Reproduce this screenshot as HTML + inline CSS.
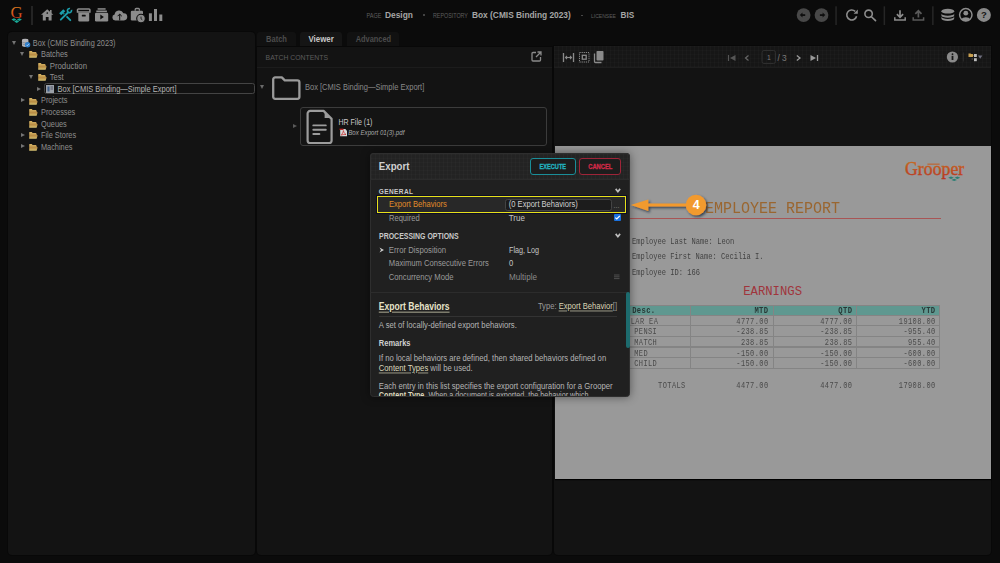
<!DOCTYPE html>
<html><head><meta charset="utf-8">
<style>
*{box-sizing:border-box;margin:0;padding:0}
html,body{width:1000px;height:563px;overflow:hidden;background:#0b0b0b;font-family:"Liberation Sans",sans-serif;color:#8c8c8c}
.a{position:absolute;white-space:nowrap;line-height:0}
.b{position:absolute}
.tri{position:absolute;width:0;height:0;border-left:2.5px solid transparent;border-right:2.5px solid transparent;border-top:4px solid #777}
.trr{position:absolute;width:0;height:0;border-top:2.5px solid transparent;border-bottom:2.5px solid transparent;border-left:4px solid #777}
.fold{position:absolute;width:9px;height:7px;background:#c9a85a;border-radius:1px}
.fold:before{content:"";position:absolute;left:0;top:-1.5px;width:4px;height:2px;background:#c9a85a;border-radius:1px 1px 0 0}
.grid{background-image:linear-gradient(rgba(255,255,255,.012) 1px,transparent 1px),linear-gradient(90deg,rgba(255,255,255,.016) 1px,transparent 1px);background-size:4px 4px}
.grid2{background-image:linear-gradient(rgba(255,255,255,.012) 1px,transparent 1px),linear-gradient(90deg,rgba(255,255,255,.02) 1px,transparent 1px);background-size:4px 4px}
svg{position:absolute;overflow:visible}
</style></head><body>
<svg style="left:0;top:0" width="30" height="30" viewBox="0 0 30 30">
 <defs><linearGradient id="gg" x1="0" y1="0" x2="0" y2="1"><stop offset="0" stop-color="#e2901e"/><stop offset="1" stop-color="#cc2a1e"/></linearGradient></defs>
 <text x="16.5" y="17.8" text-anchor="middle" font-family="Liberation Serif" font-size="16.8" fill="url(#gg)">G</text>
 <path d="M11.4 19.6 l2.5 -1.4 l2.5 1.4 l-2.5 1.4z M16.9 19.6 l2.5 -1.4 l2.5 1.4 l-2.5 1.4z M14.2 21.5 l2.5 -1.4 l2.5 1.4 l-2.5 1.4z" fill="#18a896"/>
</svg>
<div class="b" style="left:31px;top:5.8px;width:1.8px;height:19.2px;background:#242424"></div>
<svg style="left:0;top:0" width="200" height="30" viewBox="0 0 200 30">
 <path d="M47.2 9.2 L53.4 14.8 L51.6 14.8 L51.6 20.4 L48.6 20.4 L48.6 17 L45.8 17 L45.8 20.4 L42.8 20.4 L42.8 14.8 L41 14.8z" fill="#8c8c8c"/>
 <rect x="50" y="10" width="1.6" height="3" fill="#8c8c8c"/>
 <circle cx="47.3" cy="13" r="0.85" fill="#0c0c0c"/>
 <g fill="#1b9caa">
  <path d="M59.2 13.2 L63.3 9.2 L65.3 11.2 L61.2 15.2z"/>
 </g>
 <path d="M64 13.9 L70.3 20.2" stroke="#1b9caa" stroke-width="1.9" stroke-linecap="round"/>
 <path d="M60.8 19.7 L68 12.5" stroke="#0c0c0c" stroke-width="3.4" stroke-linecap="round"/>
 <path d="M60.8 19.7 L68 12.5" stroke="#1b9caa" stroke-width="1.9" stroke-linecap="round"/>
 <path d="M71.4 9.9 A2.05 2.05 0 1 1 70 8.6" stroke="#1b9caa" stroke-width="1.7" fill="none"/>
 <path d="M78.4 9 H89 a0.9 0.9 0 0 1 0.9 0.9 V12 H77.5 V9.9 a0.9 0.9 0 0 1 0.9 -0.9z" fill="none" stroke="#8c8c8c" stroke-width="1.5"/>
 <path d="M78.3 12.8 H89.2 V20.2 a1.2 1.2 0 0 1 -1.2 1.2 H79.5 a1.2 1.2 0 0 1 -1.2 -1.2z" fill="#8c8c8c"/>
 <rect x="81.8" y="14.8" width="3.9" height="1.6" rx="0.5" fill="#0c0c0c"/>
 <rect x="97.6" y="8.2" width="8" height="1.5" fill="#8c8c8c"/>
 <rect x="96.3" y="10.5" width="10.6" height="1.6" fill="#8c8c8c"/>
 <rect x="95" y="12.8" width="13.2" height="8.7" rx="1.2" fill="#8c8c8c"/>
 <path d="M100.3 14.6 L103.9 17.1 L100.3 19.6z" fill="#0c0c0c"/>
 <path d="M115.2 20.4 a3 3 0 0 1 -0.6 -5.9 a4.6 4.6 0 0 1 8.8 -1.3 a3.6 3.6 0 0 1 0.5 7.2z" fill="#8c8c8c"/>
 <path d="M119.7 20.4 V14.2 M117.6 16.2 L119.7 14.1 L121.8 16.2" stroke="#0c0c0c" stroke-width="1" fill="none"/>
 <path d="M135.2 10.8 V9.5 a1 1 0 0 1 1 -1 h2.2 a1 1 0 0 1 1 1 V10.8" fill="none" stroke="#8c8c8c" stroke-width="1.3"/>
 <rect x="130.8" y="10.8" width="12.2" height="9.6" rx="1.2" fill="#8c8c8c"/>
 <circle cx="141" cy="18.6" r="4.3" fill="#8c8c8c" stroke="#0c0c0c" stroke-width="1.1"/>
 <path d="M141 16.6 V18.8 L142.3 19.8" stroke="#0c0c0c" stroke-width="0.8" fill="none"/>
 <rect x="148.9" y="13.3" width="3" height="7.7" fill="#8c8c8c"/>
 <rect x="154" y="9" width="3" height="12" fill="#8c8c8c"/>
 <rect x="159.3" y="14.5" width="3" height="6.5" fill="#8c8c8c"/>
</svg>
<div class="a" style="left:366.50px;top:15.33px;font-size:5.55px;font-weight:400;font-style:normal;color:#5e5e5e;font-family:&quot;Liberation Sans&quot;,sans-serif;transform:translateY(0.73px) scaleY(1.17);transform-origin:0 0;">PAGE</div>
<div class="a" style="left:385.00px;top:14.25px;font-size:8.40px;font-weight:700;font-style:normal;color:#a5a5a5;font-family:&quot;Liberation Sans&quot;,sans-serif;transform:translateY(0.90px) scaleY(1.17);transform-origin:0 0;">Design</div>
<div class="b" style="left:423.3px;top:14.3px;width:1.6px;height:1.6px;border-radius:50%;background:#505050"></div>
<div class="a" style="left:433.00px;top:15.34px;font-size:5.37px;font-weight:400;font-style:normal;color:#5e5e5e;font-family:&quot;Liberation Sans&quot;,sans-serif;transform:translateY(0.72px) scaleY(1.17);transform-origin:0 0;">REPOSITORY</div>
<div class="a" style="left:472.00px;top:14.25px;font-size:8.36px;font-weight:700;font-style:normal;color:#a5a5a5;font-family:&quot;Liberation Sans&quot;,sans-serif;transform:translateY(0.90px) scaleY(1.17);transform-origin:0 0;">Box (CMIS Binding 2023)</div>
<div class="b" style="left:581px;top:14.5px;width:1.6px;height:1.6px;border-radius:50%;background:#505050"></div>
<div class="a" style="left:591.00px;top:15.35px;font-size:5.05px;font-weight:400;font-style:normal;color:#5e5e5e;font-family:&quot;Liberation Sans&quot;,sans-serif;transform:translateY(0.70px) scaleY(1.17);transform-origin:0 0;">LICENSEE</div>
<div class="a" style="left:620.50px;top:14.85px;font-size:8.20px;font-weight:700;font-style:normal;color:#a5a5a5;font-family:&quot;Liberation Sans&quot;,sans-serif;transform:translateY(0.89px) scaleY(1.17);transform-origin:0 0;">BIS</div>
<svg style="left:0;top:0" width="1000" height="30" viewBox="0 0 1000 30">
 <circle cx="803.6" cy="15.1" r="6.9" fill="#484848"/>
 <path d="M802.5 12.6 L799.8 15.1 L802.5 17.6z" fill="#0e0e0e"/><rect x="802" y="14.2" width="3.2" height="1.8" fill="#0e0e0e"/>
 <circle cx="821.5" cy="15.1" r="6.9" fill="#484848"/>
 <path d="M822.6 12.6 L825.3 15.1 L822.6 17.6z" fill="#0e0e0e"/><rect x="819.9" y="14.2" width="3.2" height="1.8" fill="#0e0e0e"/>
 <rect x="835.3" y="6.3" width="1.5" height="18.7" fill="#262626"/>
 <path d="M856.6 16.2 A5 5 0 1 1 855.2 11.3" stroke="#8c8c8c" stroke-width="1.6" fill="none"/>
 <path d="M857.8 9.6 L857.8 13.8 L853.6 13.8z" fill="#8c8c8c"/>
 <circle cx="868.6" cy="13.8" r="3.7" stroke="#8c8c8c" stroke-width="1.6" fill="none"/>
 <path d="M871.2 16.5 L875.5 20.6" stroke="#8c8c8c" stroke-width="1.7" stroke-linecap="round"/>
 <rect x="883.6" y="6.3" width="1.5" height="18.7" fill="#262626"/>
 <path d="M900 10.3 V17 M896.9 14.2 L900 17.3 L903.1 14.2" stroke="#8c8c8c" stroke-width="1.7" fill="none"/>
 <path d="M894.8 17.3 V20 H905.2 V17.3" stroke="#8c8c8c" stroke-width="1.5" fill="none"/>
 <path d="M918.4 17.5 V10.8 M915.3 13.9 L918.4 10.8 L921.5 13.9" stroke="#5a5a5a" stroke-width="1.7" fill="none"/>
 <path d="M913.2 17.3 V20 H923.6 V17.3" stroke="#5a5a5a" stroke-width="1.5" fill="none"/>
 <rect x="932.1" y="6.3" width="1.5" height="18.7" fill="#262626"/>
 <ellipse cx="947.8" cy="11.2" rx="6.4" ry="2.4" fill="#8c8c8c"/>
 <path d="M941.4 13.4 a6.4 2.4 0 0 0 12.8 0 v2 a6.4 2.4 0 0 1 -12.8 0z" fill="#8c8c8c"/>
 <path d="M941.4 16.6 a6.4 2.4 0 0 0 12.8 0 v2 a6.4 2.4 0 0 1 -12.8 0z" fill="#8c8c8c"/>
 <circle cx="965.8" cy="14.8" r="6.2" stroke="#8c8c8c" stroke-width="1.5" fill="none"/>
 <circle cx="965.8" cy="13.2" r="2.4" fill="#8c8c8c"/>
 <path d="M961.2 19.3 a5 3.2 0 0 1 9.2 0 a6.2 6.2 0 0 1 -9.2 0z" fill="#8c8c8c"/>
 <circle cx="983.9" cy="14.9" r="7" fill="#8a8a8a"/>
 <text x="983.9" y="18.3" text-anchor="middle" font-family="Liberation Sans" font-weight="700" font-size="9.5" fill="#161616">?</text>
</svg>
<div class="b" style="left:8px;top:32px;width:246.5px;height:522.5px;border-radius:4px;background:#131313;box-shadow:0 0 0 1px #080808"></div>
<div class="b" style="left:11.8px;top:40.8px;width:0;height:0;border-left:2.4px solid transparent;border-right:2.4px solid transparent;border-top:4px solid #747474"></div>
<svg style="left:20.5px;top:38.3px" width="10" height="10" viewBox="0 0 10 10"><path d="M1 2 a3.2 1.3 0 0 1 6.4 0 V7.6 a3.2 1.3 0 0 1 -6.4 0z" fill="#b4b4b8"/><path d="M1 3.6 a3.2 1.3 0 0 0 6.4 0 M1 5.4 a3.2 1.3 0 0 0 6.4 0" stroke="#6a6a70" stroke-width="0.5" fill="none"/><circle cx="6.6" cy="6.8" r="2.7" fill="#2f7ec8"/><path d="M5.3 6.8 L6.3 7.8 L8 5.8" stroke="#cfe4ff" stroke-width="0.7" fill="none"/></svg>
<div class="a" style="left:32.80px;top:42.58px;font-size:7.33px;font-weight:400;font-style:normal;color:#8f8f8f;font-family:&quot;Liberation Sans&quot;,sans-serif;transform:translateY(0.84px) scaleY(1.17);transform-origin:0 0;">Box (CMIS Binding 2023)</div>
<div class="b" style="left:20px;top:52.36px;width:0;height:0;border-left:2.4px solid transparent;border-right:2.4px solid transparent;border-top:4px solid #747474"></div><svg style="left:29px;top:51.36px" width="10" height="8" viewBox="0 0 10 8"><defs><linearGradient id="fg" x1="0" y1="0" x2="0" y2="1"><stop offset="0" stop-color="#d8b868"/><stop offset=".55" stop-color="#b88c44"/><stop offset="1" stop-color="#d4c070"/></linearGradient></defs><path d="M0.2 0.6 Q0.2 0.1 0.7 0.1 H2.8 L3.6 0.9 H7.3 V2 L8.6 3.6 L7.6 6.7 H0.2z" fill="url(#fg)"/></svg>
<div class="a" style="left:41.00px;top:54.14px;font-size:7.42px;font-weight:400;font-style:normal;color:#8f8f8f;font-family:&quot;Liberation Sans&quot;,sans-serif;transform:translateY(0.85px) scaleY(1.17);transform-origin:0 0;">Batches</div>
<svg style="left:37.5px;top:62.92px" width="10" height="8" viewBox="0 0 10 8"><defs><linearGradient id="fg" x1="0" y1="0" x2="0" y2="1"><stop offset="0" stop-color="#d8b868"/><stop offset=".55" stop-color="#b88c44"/><stop offset="1" stop-color="#d4c070"/></linearGradient></defs><path d="M0.2 0.6 Q0.2 0.1 0.7 0.1 H2.8 L3.6 0.9 H7.3 V2 L8.6 3.6 L7.6 6.7 H0.2z" fill="url(#fg)"/></svg>
<div class="a" style="left:49.70px;top:65.69px;font-size:7.82px;font-weight:400;font-style:normal;color:#8f8f8f;font-family:&quot;Liberation Sans&quot;,sans-serif;transform:translateY(0.87px) scaleY(1.17);transform-origin:0 0;">Production</div>
<div class="b" style="left:28.5px;top:75.47999999999999px;width:0;height:0;border-left:2.4px solid transparent;border-right:2.4px solid transparent;border-top:4px solid #747474"></div><svg style="left:37.5px;top:74.47999999999999px" width="10" height="8" viewBox="0 0 10 8"><defs><linearGradient id="fg" x1="0" y1="0" x2="0" y2="1"><stop offset="0" stop-color="#d8b868"/><stop offset=".55" stop-color="#b88c44"/><stop offset="1" stop-color="#d4c070"/></linearGradient></defs><path d="M0.2 0.6 Q0.2 0.1 0.7 0.1 H2.8 L3.6 0.9 H7.3 V2 L8.6 3.6 L7.6 6.7 H0.2z" fill="url(#fg)"/></svg>
<div class="a" style="left:49.70px;top:77.25px;font-size:7.58px;font-weight:400;font-style:normal;color:#8f8f8f;font-family:&quot;Liberation Sans&quot;,sans-serif;transform:translateY(0.85px) scaleY(1.17);transform-origin:0 0;">Test</div>
<div class="b" style="left:37px;top:86.63999999999999px;width:0;height:0;border-top:2.4px solid transparent;border-bottom:2.4px solid transparent;border-left:4px solid #747474"></div>
<div class="b" style="left:43.5px;top:83.13999999999999px;width:211px;height:11.2px;border:1px solid #444;border-radius:2.5px;background:#121212"></div>
<svg style="left:46px;top:85.03999999999999px" width="9" height="8" viewBox="0 0 9 8"><rect x="0" y="0" width="8" height="8" fill="#9aa0a8"/><rect x="1.5" y="1.5" width="2" height="5" fill="#3f5f8a"/><rect x="4.5" y="1.5" width="2.5" height="1" fill="#556"/><rect x="4.5" y="3.5" width="2.5" height="1" fill="#556"/></svg>
<div class="a" style="left:57.50px;top:88.82px;font-size:7.49px;font-weight:400;font-style:normal;color:#b5b5b5;font-family:&quot;Liberation Sans&quot;,sans-serif;transform:translateY(0.85px) scaleY(1.17);transform-origin:0 0;">Box [CMIS Binding—Simple Export]</div>
<div class="b" style="left:20.5px;top:98.19999999999999px;width:0;height:0;border-top:2.4px solid transparent;border-bottom:2.4px solid transparent;border-left:4px solid #747474"></div>
<svg style="left:29px;top:97.6px" width="10" height="8" viewBox="0 0 10 8"><defs><linearGradient id="fg" x1="0" y1="0" x2="0" y2="1"><stop offset="0" stop-color="#d8b868"/><stop offset=".55" stop-color="#b88c44"/><stop offset="1" stop-color="#d4c070"/></linearGradient></defs><path d="M0.2 0.6 Q0.2 0.1 0.7 0.1 H2.8 L3.6 0.9 H7.3 V2 L8.6 3.6 L7.6 6.7 H0.2z" fill="url(#fg)"/></svg>
<div class="a" style="left:41.00px;top:100.38px;font-size:7.35px;font-weight:400;font-style:normal;color:#8f8f8f;font-family:&quot;Liberation Sans&quot;,sans-serif;transform:translateY(0.84px) scaleY(1.17);transform-origin:0 0;">Projects</div>
<svg style="left:29px;top:109.16px" width="10" height="8" viewBox="0 0 10 8"><defs><linearGradient id="fg" x1="0" y1="0" x2="0" y2="1"><stop offset="0" stop-color="#d8b868"/><stop offset=".55" stop-color="#b88c44"/><stop offset="1" stop-color="#d4c070"/></linearGradient></defs><path d="M0.2 0.6 Q0.2 0.1 0.7 0.1 H2.8 L3.6 0.9 H7.3 V2 L8.6 3.6 L7.6 6.7 H0.2z" fill="url(#fg)"/></svg>
<div class="a" style="left:41.00px;top:111.94px;font-size:7.35px;font-weight:400;font-style:normal;color:#8f8f8f;font-family:&quot;Liberation Sans&quot;,sans-serif;transform:translateY(0.84px) scaleY(1.17);transform-origin:0 0;">Processes</div>
<svg style="left:29px;top:120.72px" width="10" height="8" viewBox="0 0 10 8"><defs><linearGradient id="fg" x1="0" y1="0" x2="0" y2="1"><stop offset="0" stop-color="#d8b868"/><stop offset=".55" stop-color="#b88c44"/><stop offset="1" stop-color="#d4c070"/></linearGradient></defs><path d="M0.2 0.6 Q0.2 0.1 0.7 0.1 H2.8 L3.6 0.9 H7.3 V2 L8.6 3.6 L7.6 6.7 H0.2z" fill="url(#fg)"/></svg>
<div class="a" style="left:41.00px;top:123.50px;font-size:7.35px;font-weight:400;font-style:normal;color:#8f8f8f;font-family:&quot;Liberation Sans&quot;,sans-serif;transform:translateY(0.84px) scaleY(1.17);transform-origin:0 0;">Queues</div>
<div class="b" style="left:20.5px;top:132.88px;width:0;height:0;border-top:2.4px solid transparent;border-bottom:2.4px solid transparent;border-left:4px solid #747474"></div>
<svg style="left:29px;top:132.28px" width="10" height="8" viewBox="0 0 10 8"><defs><linearGradient id="fg" x1="0" y1="0" x2="0" y2="1"><stop offset="0" stop-color="#d8b868"/><stop offset=".55" stop-color="#b88c44"/><stop offset="1" stop-color="#d4c070"/></linearGradient></defs><path d="M0.2 0.6 Q0.2 0.1 0.7 0.1 H2.8 L3.6 0.9 H7.3 V2 L8.6 3.6 L7.6 6.7 H0.2z" fill="url(#fg)"/></svg>
<div class="a" style="left:41.00px;top:135.06px;font-size:7.35px;font-weight:400;font-style:normal;color:#8f8f8f;font-family:&quot;Liberation Sans&quot;,sans-serif;transform:translateY(0.84px) scaleY(1.17);transform-origin:0 0;">File Stores</div>
<div class="b" style="left:20.5px;top:144.44px;width:0;height:0;border-top:2.4px solid transparent;border-bottom:2.4px solid transparent;border-left:4px solid #747474"></div>
<svg style="left:29px;top:143.84px" width="10" height="8" viewBox="0 0 10 8"><defs><linearGradient id="fg" x1="0" y1="0" x2="0" y2="1"><stop offset="0" stop-color="#d8b868"/><stop offset=".55" stop-color="#b88c44"/><stop offset="1" stop-color="#d4c070"/></linearGradient></defs><path d="M0.2 0.6 Q0.2 0.1 0.7 0.1 H2.8 L3.6 0.9 H7.3 V2 L8.6 3.6 L7.6 6.7 H0.2z" fill="url(#fg)"/></svg>
<div class="a" style="left:41.00px;top:146.62px;font-size:7.35px;font-weight:400;font-style:normal;color:#8f8f8f;font-family:&quot;Liberation Sans&quot;,sans-serif;transform:translateY(0.84px) scaleY(1.17);transform-origin:0 0;">Machines</div>
<div class="b" style="left:257px;top:32px;width:38.5px;height:14.5px;background:#111;border-radius:3px 3px 0 0"></div>
<div class="b" style="left:300px;top:32px;width:42px;height:14.5px;background:#151515;border-radius:3px 3px 0 0"></div>
<div class="b" style="left:347px;top:32px;width:52px;height:14.5px;background:#111;border-radius:3px 3px 0 0"></div>
<div class="a" style="left:266.00px;top:39.27px;font-size:7.56px;font-weight:700;font-style:normal;color:#4c4c4c;font-family:&quot;Liberation Sans&quot;,sans-serif;transform:translateY(0.85px) scaleY(1.17);transform-origin:0 0;">Batch</div>
<div class="a" style="left:308.50px;top:39.26px;font-size:7.86px;font-weight:700;font-style:normal;color:#c8c8c8;font-family:&quot;Liberation Sans&quot;,sans-serif;transform:translateY(0.87px) scaleY(1.17);transform-origin:0 0;">Viewer</div>
<div class="a" style="left:355.70px;top:39.28px;font-size:7.41px;font-weight:700;font-style:normal;color:#4c4c4c;font-family:&quot;Liberation Sans&quot;,sans-serif;transform:translateY(0.84px) scaleY(1.17);transform-origin:0 0;">Advanced</div>
<div class="b" style="left:257px;top:46.5px;width:294.5px;height:508px;border-radius:0 0 4px 4px;background:#131313;box-shadow:0 0 0 1px #080808"></div>
<div class="a" style="left:265.60px;top:57.49px;font-size:6.87px;font-weight:400;font-style:normal;color:#5c5c5c;font-family:&quot;Liberation Sans&quot;,sans-serif;transform:translateY(0.81px) scaleY(1.17);transform-origin:0 0;">BATCH CONTENTS</div>
<div class="b" style="left:257px;top:67px;width:294.5px;height:1px;background:#1c1c1c"></div>
<svg style="left:531px;top:51px" width="11" height="11" viewBox="0 0 11 11"><path d="M5 1.5 H2 a1 1 0 0 0 -1 1 V9 a1 1 0 0 0 1 1 H8.5 a1 1 0 0 0 1 -1 V6" stroke="#8a8a8a" stroke-width="1.3" fill="none"/><path d="M6.5 1 H10 V4.5 M10 1 L5 6" stroke="#8a8a8a" stroke-width="1.3" fill="none"/></svg>
<div class="b" style="left:260px;top:85px;width:0;height:0;border-left:2.3px solid transparent;border-right:2.3px solid transparent;border-top:4px solid #6a6a6a"></div>
<svg style="left:272px;top:75.5px" width="29" height="24" viewBox="0 0 29 24"><path d="M3.2 1.4 H9.8 L12.8 4.4 H25.4 a2 2 0 0 1 2 2 V20.8 a2 2 0 0 1 -2 2 H3.2 a2 2 0 0 1 -2 -2 V3.4 a2 2 0 0 1 2 -2z" stroke="#9a9a9a" stroke-width="2.3" fill="none" stroke-linejoin="round"/></svg>
<div class="a" style="left:305.00px;top:86.77px;font-size:7.51px;font-weight:400;font-style:normal;color:#888;font-family:&quot;Liberation Sans&quot;,sans-serif;transform:translateY(0.85px) scaleY(1.17);transform-origin:0 0;">Box [CMIS Binding—Simple Export]</div>
<div class="b" style="left:300.3px;top:107.3px;width:246.7px;height:38.7px;border:1px solid #3c3c3c;border-radius:3px;background:#141414"></div>
<div class="b" style="left:293px;top:124px;width:0;height:0;border-top:2.3px solid transparent;border-bottom:2.3px solid transparent;border-left:4.5px solid #5a5a5a"></div>
<svg style="left:306px;top:109px" width="28" height="36" viewBox="0 0 28 36"><path d="M4.2 1.9 H17.6 L25.6 9.9 V31.4 a2.6 2.6 0 0 1 -2.6 2.6 H4.2 a2.6 2.6 0 0 1 -2.6 -2.6 V4.5 a2.6 2.6 0 0 1 2.6 -2.6z" stroke="#9c9c9c" stroke-width="2.2" fill="none" stroke-linejoin="round"/><path d="M18.6 3 V8.9 H24.5z" fill="#9c9c9c"/><path d="M7.3 16.4 H19.8 M7.3 20.7 H19.8 M7.3 25 H13.4" stroke="#9c9c9c" stroke-width="1.9" stroke-linecap="round"/></svg>
<div class="a" style="left:338.40px;top:121.69px;font-size:7.05px;font-weight:400;font-style:normal;color:#c8c8c8;font-family:&quot;Liberation Sans&quot;,sans-serif;transform:translateY(0.82px) scaleY(1.17);transform-origin:0 0;">HR File (1)</div>
<svg style="left:338.5px;top:128px" width="9" height="9" viewBox="0 0 9 9"><path d="M1.2 1 H6.3 L8 2.7 V8.2 H1.2z" fill="#d8d8d8"/><rect x="0.5" y="0.6" width="4" height="1.3" fill="#b01818"/><path d="M2.3 7.2 C3.5 5.5 4.3 3.8 4.4 2.6 C4.6 3.8 5.5 5.6 7 6.6 C5.5 6.3 3.8 6.5 2.3 7.2z" stroke="#c42020" stroke-width="0.7" fill="none"/></svg>
<div class="a" style="left:348.30px;top:132.12px;font-size:6.11px;font-weight:400;font-style:italic;color:#aaa;font-family:&quot;Liberation Sans&quot;,sans-serif;transform:translateY(0.77px) scaleY(1.17);transform-origin:0 0;">Box Export 01(3).pdf</div>
<div class="b" style="left:554px;top:46px;width:437.4px;height:508.5px;border-radius:0 0 4px 4px;background:#131313;box-shadow:0 0 0 1px #080808"></div>
<div class="b grid" style="left:554px;top:46px;width:437.4px;height:22px;background-color:#161616;border-radius:0;border-bottom:1px solid #1e1e1e"></div>
<svg style="left:560px;top:48px" width="50" height="18" viewBox="0 0 50 18">
 <path d="M3.5 5 V14 M13.5 5 V14" stroke="#8a8a8a" stroke-width="1.3"/>
 <path d="M5.5 9.5 H11.5 M7 8 L5.5 9.5 L7 11 M10 8 L11.5 9.5 L10 11" stroke="#8a8a8a" stroke-width="1.1" fill="none"/>
 <rect x="19.5" y="4.5" width="9.5" height="9.5" stroke="#8a8a8a" stroke-width="1" stroke-dasharray="1.2 0.9" fill="none"/>
 <rect x="22.3" y="7.3" width="3.9" height="3.9" stroke="#8a8a8a" stroke-width="1.3" fill="none"/>
 <rect x="36.5" y="3" width="7" height="9.5" rx="0.8" fill="#8a8a8a"/>
 <path d="M34.5 5.5 V13.5 a1 1 0 0 0 1 1 H41.5" stroke="#8a8a8a" stroke-width="1.3" fill="none"/>
</svg>
<svg style="left:725px;top:48px" width="100" height="18" viewBox="0 0 100 18">
 <path d="M3.5 7 V13" stroke="#555" stroke-width="1.2"/><path d="M10.5 7 L5 10 L10.5 13z" fill="#555"/>
 <path d="M23.5 7.5 L20.5 10 L23.5 12.5" stroke="#666" stroke-width="1.2" fill="none"/>
 <rect x="37" y="2.5" width="13.5" height="13" rx="2" stroke="#2e2e2e" stroke-width="1" fill="none"/>
 <path d="M71.8 7.5 L75 10 L71.8 12.5" stroke="#999" stroke-width="1.3" fill="none"/>
 <path d="M85.5 7 L91 10 L85.5 13z" fill="#999"/><path d="M92.5 7 V13" stroke="#999" stroke-width="1.3"/>
</svg>
<div class="a" style="left:767.00px;top:57.10px;font-size:6.80px;font-weight:400;font-style:normal;color:#7a7a7a;font-family:&quot;Liberation Sans&quot;,sans-serif;transform:translateY(0.81px) scaleY(1.17);transform-origin:0 0;">1</div>
<div class="a" style="left:777.40px;top:57.05px;font-size:8.36px;font-weight:400;font-style:normal;color:#7a7a7a;font-family:&quot;Liberation Sans&quot;,sans-serif;transform:translateY(0.90px) scaleY(1.17);transform-origin:0 0;">/ 3</div>
<svg style="left:945px;top:49px" width="45" height="16" viewBox="0 0 45 16">
 <circle cx="7.4" cy="8" r="5.6" fill="#8a8a8a"/>
 <rect x="6.6" y="6.8" width="1.8" height="4.2" fill="#161616"/><circle cx="7.5" cy="5.2" r="0.9" fill="#161616"/>
 <rect x="17.8" y="3.5" width="1" height="9" fill="#2e2e2e"/>
 <path d="M23.5 4.5 h2 l0.6 0.6 h1.6 l0.8 1.5 l-0.8 1.5 h-4.2z" fill="#c9a050"/>
 <rect x="29" y="5" width="2.8" height="3" fill="#bdbdbd"/><rect x="29" y="9.2" width="2.8" height="3" fill="#bdbdbd"/><rect x="26.5" y="9.6" width="1.5" height="0.8" fill="#666"/>
 <path d="M33 6.6 L37.4 6.6 L35.2 9.8z" fill="#707080"/>
</svg>
<div class="b" style="left:555px;top:145.5px;width:435.5px;height:333.5px;background:#999999;box-shadow:0 1px 1px #000"></div>
<svg style="left:0;top:0" width="1000" height="200" viewBox="0 0 1000 200">
 <defs><linearGradient id="glg" x1="0" y1="0" x2="0" y2="1"><stop offset="0" stop-color="#c8721e"/><stop offset="1" stop-color="#b83220"/></linearGradient></defs>
 <text x="905" y="175.4" font-family="Liberation Serif" font-size="19.5" textLength="59.2" lengthAdjust="spacingAndGlyphs" fill="url(#glg)" stroke="url(#glg)" stroke-width="0.45">Grooper</text>
 <rect x="927.4" y="163.6" width="12.2" height="1.1" fill="#c06028"/>
 <path d="M948.2 177.7 l2.8 -1.2 l2.8 1.2 l-2.8 1.2z M954.6 177.7 l2.8 -1.2 l2.8 1.2 l-2.8 1.2z M951.4 179.9 l2.8 -1.2 l2.8 1.2 l-2.8 1.2z" fill="#2a7f74"/>
</svg>
<div class="a" style="left:705.00px;top:209.70px;font-size:15.00px;font-weight:400;font-style:normal;color:#9a6630;font-family:&quot;Liberation Mono&quot;,sans-serif;transform:scaleY(1.12);transform-origin:0 0">EMPLOYEE REPORT</div>
<div class="b" style="left:630px;top:217.5px;width:310.5px;height:1.2px;background:#a85555"></div>
<div class="a" style="left:632.00px;top:241.61px;font-size:7.10px;font-weight:400;font-style:normal;color:#424242;font-family:&quot;Liberation Mono&quot;,sans-serif;transform:scaleY(1.15);transform-origin:0 0;">Employee Last Name: Leon</div>
<div class="a" style="left:632.00px;top:257.31px;font-size:7.07px;font-weight:400;font-style:normal;color:#424242;font-family:&quot;Liberation Mono&quot;,sans-serif;transform:scaleY(1.15);transform-origin:0 0;">Employee First Name: Cecilia I.</div>
<div class="a" style="left:632.00px;top:272.91px;font-size:7.08px;font-weight:400;font-style:normal;color:#424242;font-family:&quot;Liberation Mono&quot;,sans-serif;transform:scaleY(1.15);transform-origin:0 0;">Employee ID: 166</div>
<div class="a" style="left:743.20px;top:292.22px;font-size:12.25px;font-weight:400;font-style:normal;color:#a0353c;font-family:&quot;Liberation Mono&quot;,sans-serif;transform:none">EARNINGS</div>
<div class="b" style="left:600px;top:305px;width:339.2px;height:10.2px;background:#5f9890"></div>
<div class="b" style="left:600px;top:304.5px;width:339.5px;height:1.2px;background:#848484"></div>
<div class="b" style="left:600px;top:314.7px;width:339.5px;height:1.2px;background:#848484"></div>
<div class="b" style="left:600px;top:325.1px;width:339.5px;height:1.2px;background:#848484"></div>
<div class="b" style="left:600px;top:335.7px;width:339.5px;height:1.2px;background:#848484"></div>
<div class="b" style="left:600px;top:346.4px;width:339.5px;height:1.2px;background:#848484"></div>
<div class="b" style="left:600px;top:357.1px;width:339.5px;height:1.2px;background:#848484"></div>
<div class="b" style="left:600px;top:367.7px;width:339.5px;height:1.2px;background:#848484"></div>
<div class="b" style="left:689.5px;top:305px;width:1.2px;height:63.2px;background:#848484"></div>
<div class="b" style="left:772.7px;top:305px;width:1.2px;height:63.2px;background:#848484"></div>
<div class="b" style="left:855.5px;top:305px;width:1.2px;height:63.2px;background:#848484"></div>
<div class="b" style="left:938.5px;top:305px;width:1.2px;height:63.2px;background:#848484"></div>
<div class="a" style="left:632.20px;top:311.12px;font-size:7.20px;font-weight:700;font-style:normal;color:#283836;font-family:&quot;Liberation Mono&quot;,sans-serif;letter-spacing:0.35px;transform:scaleY(1.15);transform-origin:0 0">Desc.</div>
<div class="a" style="left:754.44px;top:311.12px;font-size:7.20px;font-weight:700;font-style:normal;color:#283836;font-family:&quot;Liberation Mono&quot;,sans-serif;letter-spacing:0.35px;transform:scaleY(1.15);transform-origin:0 0">MTD</div>
<div class="a" style="left:838.34px;top:311.12px;font-size:7.20px;font-weight:700;font-style:normal;color:#283836;font-family:&quot;Liberation Mono&quot;,sans-serif;letter-spacing:0.35px;transform:scaleY(1.15);transform-origin:0 0">QTD</div>
<div class="a" style="left:921.54px;top:311.12px;font-size:7.20px;font-weight:700;font-style:normal;color:#283836;font-family:&quot;Liberation Mono&quot;,sans-serif;letter-spacing:0.35px;transform:scaleY(1.15);transform-origin:0 0">YTD</div>
<div class="a" style="left:630.70px;top:321.70px;font-size:7.00px;font-weight:400;font-style:normal;color:#4a4a4a;font-family:&quot;Liberation Mono&quot;,sans-serif;letter-spacing:0.4px;transform:scaleY(1.2);transform-origin:0 0">LAR EA</div>
<div class="a" style="left:736.30px;top:321.70px;font-size:7.00px;font-weight:400;font-style:normal;color:#4a4a4a;font-family:&quot;Liberation Mono&quot;,sans-serif;letter-spacing:0.4px;transform:scaleY(1.2);transform-origin:0 0">4777.00</div>
<div class="a" style="left:820.20px;top:321.70px;font-size:7.00px;font-weight:400;font-style:normal;color:#4a4a4a;font-family:&quot;Liberation Mono&quot;,sans-serif;letter-spacing:0.4px;transform:scaleY(1.2);transform-origin:0 0">4777.00</div>
<div class="a" style="left:898.80px;top:321.70px;font-size:7.00px;font-weight:400;font-style:normal;color:#4a4a4a;font-family:&quot;Liberation Mono&quot;,sans-serif;letter-spacing:0.4px;transform:scaleY(1.2);transform-origin:0 0">19108.00</div>
<div class="a" style="left:634.20px;top:332.35px;font-size:7.00px;font-weight:400;font-style:normal;color:#4a4a4a;font-family:&quot;Liberation Mono&quot;,sans-serif;letter-spacing:0.4px;transform:scaleY(1.2);transform-origin:0 0">PENSI</div>
<div class="a" style="left:736.30px;top:332.35px;font-size:7.00px;font-weight:400;font-style:normal;color:#4a4a4a;font-family:&quot;Liberation Mono&quot;,sans-serif;letter-spacing:0.4px;transform:scaleY(1.2);transform-origin:0 0">-238.85</div>
<div class="a" style="left:820.20px;top:332.35px;font-size:7.00px;font-weight:400;font-style:normal;color:#4a4a4a;font-family:&quot;Liberation Mono&quot;,sans-serif;letter-spacing:0.4px;transform:scaleY(1.2);transform-origin:0 0">-238.85</div>
<div class="a" style="left:903.40px;top:332.35px;font-size:7.00px;font-weight:400;font-style:normal;color:#4a4a4a;font-family:&quot;Liberation Mono&quot;,sans-serif;letter-spacing:0.4px;transform:scaleY(1.2);transform-origin:0 0">-955.40</div>
<div class="a" style="left:634.20px;top:343.00px;font-size:7.00px;font-weight:400;font-style:normal;color:#4a4a4a;font-family:&quot;Liberation Mono&quot;,sans-serif;letter-spacing:0.4px;transform:scaleY(1.2);transform-origin:0 0">MATCH</div>
<div class="a" style="left:740.90px;top:343.00px;font-size:7.00px;font-weight:400;font-style:normal;color:#4a4a4a;font-family:&quot;Liberation Mono&quot;,sans-serif;letter-spacing:0.4px;transform:scaleY(1.2);transform-origin:0 0">238.85</div>
<div class="a" style="left:824.80px;top:343.00px;font-size:7.00px;font-weight:400;font-style:normal;color:#4a4a4a;font-family:&quot;Liberation Mono&quot;,sans-serif;letter-spacing:0.4px;transform:scaleY(1.2);transform-origin:0 0">238.85</div>
<div class="a" style="left:908.00px;top:343.00px;font-size:7.00px;font-weight:400;font-style:normal;color:#4a4a4a;font-family:&quot;Liberation Mono&quot;,sans-serif;letter-spacing:0.4px;transform:scaleY(1.2);transform-origin:0 0">955.40</div>
<div class="a" style="left:634.20px;top:353.65px;font-size:7.00px;font-weight:400;font-style:normal;color:#4a4a4a;font-family:&quot;Liberation Mono&quot;,sans-serif;letter-spacing:0.4px;transform:scaleY(1.2);transform-origin:0 0">MED</div>
<div class="a" style="left:736.30px;top:353.65px;font-size:7.00px;font-weight:400;font-style:normal;color:#4a4a4a;font-family:&quot;Liberation Mono&quot;,sans-serif;letter-spacing:0.4px;transform:scaleY(1.2);transform-origin:0 0">-150.00</div>
<div class="a" style="left:820.20px;top:353.65px;font-size:7.00px;font-weight:400;font-style:normal;color:#4a4a4a;font-family:&quot;Liberation Mono&quot;,sans-serif;letter-spacing:0.4px;transform:scaleY(1.2);transform-origin:0 0">-150.00</div>
<div class="a" style="left:903.40px;top:353.65px;font-size:7.00px;font-weight:400;font-style:normal;color:#4a4a4a;font-family:&quot;Liberation Mono&quot;,sans-serif;letter-spacing:0.4px;transform:scaleY(1.2);transform-origin:0 0">-600.00</div>
<div class="a" style="left:634.20px;top:364.30px;font-size:7.00px;font-weight:400;font-style:normal;color:#4a4a4a;font-family:&quot;Liberation Mono&quot;,sans-serif;letter-spacing:0.4px;transform:scaleY(1.2);transform-origin:0 0">CHILD</div>
<div class="a" style="left:736.30px;top:364.30px;font-size:7.00px;font-weight:400;font-style:normal;color:#4a4a4a;font-family:&quot;Liberation Mono&quot;,sans-serif;letter-spacing:0.4px;transform:scaleY(1.2);transform-origin:0 0">-150.00</div>
<div class="a" style="left:820.20px;top:364.30px;font-size:7.00px;font-weight:400;font-style:normal;color:#4a4a4a;font-family:&quot;Liberation Mono&quot;,sans-serif;letter-spacing:0.4px;transform:scaleY(1.2);transform-origin:0 0">-150.00</div>
<div class="a" style="left:903.40px;top:364.30px;font-size:7.00px;font-weight:400;font-style:normal;color:#4a4a4a;font-family:&quot;Liberation Mono&quot;,sans-serif;letter-spacing:0.4px;transform:scaleY(1.2);transform-origin:0 0">-600.00</div>
<div class="a" style="left:658.10px;top:385.70px;font-size:7.00px;font-weight:400;font-style:normal;color:#4a4a4a;font-family:&quot;Liberation Mono&quot;,sans-serif;letter-spacing:0.4px;transform:scaleY(1.2);transform-origin:0 0">TOTALS</div>
<div class="a" style="left:736.30px;top:385.70px;font-size:7.00px;font-weight:400;font-style:normal;color:#4a4a4a;font-family:&quot;Liberation Mono&quot;,sans-serif;letter-spacing:0.4px;transform:scaleY(1.2);transform-origin:0 0">4477.00</div>
<div class="a" style="left:820.20px;top:385.70px;font-size:7.00px;font-weight:400;font-style:normal;color:#4a4a4a;font-family:&quot;Liberation Mono&quot;,sans-serif;letter-spacing:0.4px;transform:scaleY(1.2);transform-origin:0 0">4477.00</div>
<div class="a" style="left:898.80px;top:385.70px;font-size:7.00px;font-weight:400;font-style:normal;color:#4a4a4a;font-family:&quot;Liberation Mono&quot;,sans-serif;letter-spacing:0.4px;transform:scaleY(1.2);transform-origin:0 0">17908.00</div>
<div class="b" style="left:370px;top:153px;width:260.2px;height:243.5px;background:#202020;border-radius:3.5px;border:1px solid #2e2e2e;box-shadow:0 0 10px rgba(0,0,0,.45)"></div>
<div class="b grid2" style="left:370px;top:153px;width:260.2px;height:26.7px;background-color:#232323;border-radius:3.5px 3.5px 0 0;border:1px solid #2e2e2e;border-bottom:1px solid #2b2b2b"></div>
<div class="a" style="left:378.80px;top:166.41px;font-size:9.69px;font-weight:700;font-style:normal;color:#d0d0d0;font-family:&quot;Liberation Sans&quot;,sans-serif;transform:translateY(0.98px) scaleY(1.17);transform-origin:0 0;">Export</div>
<div class="b" style="left:530px;top:157.9px;width:45.5px;height:16.8px;border:1.2px solid #1a8e99;border-radius:3px;background:#1d1d1d"></div>
<div class="b" style="left:579.3px;top:157.9px;width:42.2px;height:16.8px;border:1.2px solid #9e2438;border-radius:3px;background:#1d1d1d"></div>
<div class="a" style="left:539.50px;top:166.03px;font-size:5.63px;font-weight:700;font-style:normal;color:#22b4c0;font-family:&quot;Liberation Sans&quot;,sans-serif;transform:translateY(0.74px) scaleY(1.17);transform-origin:0 0;-webkit-text-stroke:0.25px #22b4c0">EXECUTE</div>
<div class="a" style="left:588.30px;top:166.03px;font-size:5.76px;font-weight:700;font-style:normal;color:#d42a48;font-family:&quot;Liberation Sans&quot;,sans-serif;transform:translateY(0.75px) scaleY(1.17);transform-origin:0 0;-webkit-text-stroke:0.25px #d42a48">CANCEL</div>
<div class="a" style="left:378.80px;top:190.50px;font-size:6.52px;font-weight:700;font-style:normal;color:#c8c8c8;font-family:&quot;Liberation Sans&quot;,sans-serif;transform:translateY(0.79px) scaleY(1.17);transform-origin:0 0;letter-spacing:0.4px">GENERAL</div>
<svg style="left:614px;top:188.2px" width="8" height="6" viewBox="0 0 8 6"><path d="M1.7 0.9 L3.9 3.7 L6.1 0.9" stroke="#bdbdbd" stroke-width="1.7" fill="none"/></svg>
<div class="b" style="left:377.4px;top:196.2px;width:248.5px;height:17px;border:1.5px solid #e6e01a;background:#282828;box-shadow:0 0 0 1px #0c0c26"></div>
<div class="b" style="left:504.5px;top:198.7px;width:107px;height:12.2px;border:1px solid #444;border-radius:2.5px;background:#1c1c1c"></div>
<div class="a" style="left:389.00px;top:204.17px;font-size:7.60px;font-weight:400;font-style:normal;color:#e08a2a;font-family:&quot;Liberation Sans&quot;,sans-serif;transform:translateY(0.86px) scaleY(1.17);transform-origin:0 0;">Export Behaviors</div>
<div class="a" style="left:508.80px;top:204.37px;font-size:7.57px;font-weight:400;font-style:normal;color:#cfcfcf;font-family:&quot;Liberation Sans&quot;,sans-serif;transform:translateY(0.85px) scaleY(1.17);transform-origin:0 0;">(0 Export Behaviors)</div>
<div class="a" style="left:613.50px;top:204.79px;font-size:7.00px;font-weight:400;font-style:normal;color:#777;font-family:&quot;Liberation Sans&quot;,sans-serif;transform:translateY(0.82px) scaleY(1.17);transform-origin:0 0;">...</div>
<div class="a" style="left:389.00px;top:217.77px;font-size:7.56px;font-weight:400;font-style:normal;color:#9a9a9a;font-family:&quot;Liberation Sans&quot;,sans-serif;transform:translateY(0.85px) scaleY(1.17);transform-origin:0 0;">Required</div>
<div class="a" style="left:508.80px;top:217.76px;font-size:7.97px;font-weight:400;font-style:normal;color:#c5c5c5;font-family:&quot;Liberation Sans&quot;,sans-serif;transform:translateY(0.88px) scaleY(1.17);transform-origin:0 0;">True</div>
<div class="b" style="left:613.8px;top:213.6px;width:7px;height:7px;background:#1a72e0;border-radius:1px"></div>
<svg style="left:614px;top:213.8px" width="7" height="7" viewBox="0 0 7 7"><path d="M1.3 3.6 L2.8 5 L5.8 1.8" stroke="#fff" stroke-width="1.2" fill="none"/></svg>
<div class="a" style="left:379.00px;top:235.69px;font-size:6.97px;font-weight:700;font-style:normal;color:#c8c8c8;font-family:&quot;Liberation Sans&quot;,sans-serif;transform:translateY(0.82px) scaleY(1.17);transform-origin:0 0;">PROCESSING OPTIONS</div>
<svg style="left:614px;top:233.4px" width="8" height="6" viewBox="0 0 8 6"><path d="M1.7 0.9 L3.9 3.7 L6.1 0.9" stroke="#bdbdbd" stroke-width="1.7" fill="none"/></svg>
<svg style="left:379px;top:247px" width="6" height="6" viewBox="0 0 6 6"><path d="M0.5 0.5 L5 3 L0.5 5.5 L2 3z" fill="#ccc"/></svg>
<div class="a" style="left:388.80px;top:249.67px;font-size:7.77px;font-weight:400;font-style:normal;color:#9a9a9a;font-family:&quot;Liberation Sans&quot;,sans-serif;transform:translateY(0.87px) scaleY(1.17);transform-origin:0 0;">Error Disposition</div>
<div class="a" style="left:388.80px;top:262.87px;font-size:7.64px;font-weight:400;font-style:normal;color:#9a9a9a;font-family:&quot;Liberation Sans&quot;,sans-serif;transform:translateY(0.86px) scaleY(1.17);transform-origin:0 0;">Maximum Consecutive Errors</div>
<div class="a" style="left:388.80px;top:276.57px;font-size:7.66px;font-weight:400;font-style:normal;color:#9a9a9a;font-family:&quot;Liberation Sans&quot;,sans-serif;transform:translateY(0.86px) scaleY(1.17);transform-origin:0 0;">Concurrency Mode</div>
<div class="a" style="left:509.00px;top:249.78px;font-size:7.22px;font-weight:400;font-style:normal;color:#c5c5c5;font-family:&quot;Liberation Sans&quot;,sans-serif;transform:translateY(0.83px) scaleY(1.17);transform-origin:0 0;">Flag, Log</div>
<div class="a" style="left:509.00px;top:262.77px;font-size:7.60px;font-weight:400;font-style:normal;color:#c5c5c5;font-family:&quot;Liberation Sans&quot;,sans-serif;transform:translateY(0.86px) scaleY(1.17);transform-origin:0 0;">0</div>
<div class="a" style="left:509.00px;top:276.56px;font-size:8.13px;font-weight:400;font-style:normal;color:#8a8a8a;font-family:&quot;Liberation Sans&quot;,sans-serif;transform:translateY(0.89px) scaleY(1.17);transform-origin:0 0;">Multiple</div>
<svg style="left:613.8px;top:274px" width="6" height="6" viewBox="0 0 6 6"><path d="M0 1 H5.5 M0 2.8 H5.5 M0 4.6 H5.5" stroke="#555" stroke-width="0.9"/></svg>
<div class="b" style="left:370px;top:291.8px;width:260px;height:1px;background:#2c2c2c"></div>
<div class="b" style="left:626px;top:292px;width:3.5px;height:56px;background:#1d6b6e;border-radius:2px"></div>
<div class="a" style="left:378.80px;top:306.34px;font-size:8.56px;font-weight:700;font-style:normal;color:#e6e3c8;font-family:&quot;Liberation Sans&quot;,sans-serif;transform:translateY(0.91px) scaleY(1.17);transform-origin:0 0;text-decoration:underline;text-decoration-thickness:0.6px;text-underline-offset:1.2px;text-decoration-color:#9a9884">Export Behaviors</div>
<div class="a" style="left:537.90px;top:305.77px;font-size:7.62px;font-weight:400;font-style:normal;color:#9a9a9a;font-family:&quot;Liberation Sans&quot;,sans-serif;transform:translateY(0.86px) scaleY(1.17);transform-origin:0 0;">Type: <span style="color:#d8d4b4;text-decoration:underline;text-decoration-thickness:0.5px;text-decoration-color:#8a8878">Export Behavior</span>[]</div>
<div class="b" style="left:378.8px;top:315.5px;width:238px;height:1px;background:#333"></div>
<div class="a" style="left:378.80px;top:325.47px;font-size:7.69px;font-weight:400;font-style:normal;color:#b5b5b5;font-family:&quot;Liberation Sans&quot;,sans-serif;transform:translateY(0.86px) scaleY(1.17);transform-origin:0 0;">A set of locally-defined export behaviors.</div>
<div class="a" style="left:378.80px;top:343.47px;font-size:7.53px;font-weight:700;font-style:normal;color:#cfcfcf;font-family:&quot;Liberation Sans&quot;,sans-serif;transform:translateY(0.85px) scaleY(1.17);transform-origin:0 0;">Remarks</div>
<div class="a" style="left:378.80px;top:357.77px;font-size:7.70px;font-weight:400;font-style:normal;color:#b5b5b5;font-family:&quot;Liberation Sans&quot;,sans-serif;transform:translateY(0.86px) scaleY(1.17);transform-origin:0 0;">If no local behaviors are defined, then shared behaviors defined on</div>
<div class="a" style="left:378.80px;top:367.87px;font-size:7.70px;font-weight:400;font-style:normal;color:#b5b5b5;font-family:&quot;Liberation Sans&quot;,sans-serif;transform:translateY(0.86px) scaleY(1.17);transform-origin:0 0;"><span style="color:#dcd8bc;text-decoration:underline;text-decoration-thickness:0.5px;text-decoration-color:#8a8878">Content Types</span> will be used.</div>
<div class="b" style="left:370px;top:380px;width:260px;height:16px;overflow:hidden;border-radius:0 0 4px 4px">
<div class="a" style="left:8.80px;top:5.87px;font-size:7.73px;font-weight:400;font-style:normal;color:#b5b5b5;font-family:&quot;Liberation Sans&quot;,sans-serif;transform:translateY(0.86px) scaleY(1.17);transform-origin:0 0;">Each entry in this list specifies the export configuration for a Grooper</div>
<div class="a" style="left:8.80px;top:15.28px;font-size:7.23px;font-weight:400;font-style:normal;color:#b5b5b5;font-family:&quot;Liberation Sans&quot;,sans-serif;transform:translateY(0.83px) scaleY(1.17);transform-origin:0 0;"><span style="color:#dcd8bc;text-decoration:underline;text-decoration-thickness:0.5px;font-weight:700">Content Type</span>. When a document is exported, the behavior which</div>
</div>
<svg style="left:628px;top:193px" width="80" height="26" viewBox="0 0 80 26">
 <defs><filter id="sh" x="-20%" y="-50%" width="140%" height="200%"><feDropShadow dx="1.5" dy="1.5" stdDeviation="1" flood-color="#1a2a40" flood-opacity="0.8"/></filter></defs>
 <g filter="url(#sh)">
 <path d="M2.8 12 L20.3 6.4 L20.3 10.4 L60 10.4 L60 13.6 L20.3 13.6 L20.3 18z" fill="#f29a2e"/>
 <circle cx="68" cy="12" r="10.3" fill="#f29a2e"/>
 </g>
 <text x="68.2" y="16.4" text-anchor="middle" font-family="Liberation Sans" font-weight="700" font-size="12.5" fill="#fff">4</text>
</svg>
</body></html>
